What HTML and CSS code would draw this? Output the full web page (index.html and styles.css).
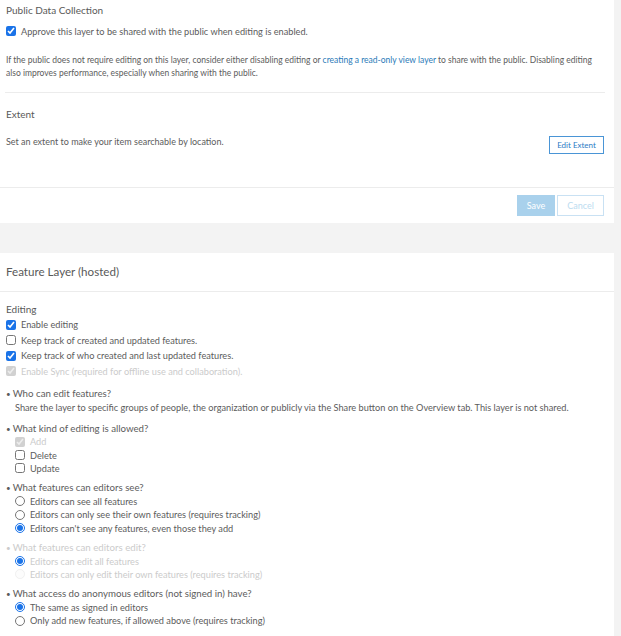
FILE: index.html
```html
<!DOCTYPE html>
<html lang="en">
<head>
    <meta charset="UTF-8">
    <meta name="viewport" content="width=device-width, initial-scale=1.0">
    <title>Settings</title>
    <link rel="stylesheet" href="styles.css">
</head>
<body>
    <div class="page">
        <div class="card">
            <div class="section public">
                <div class="title">Public Data Collection</div>
                <label class="check-row">
                    <input type="checkbox" checked>
                    <span>Approve this layer to be shared with the public when editing is enabled.</span>
                </label>
                <p class="note">If the public does not require editing on this layer, consider either disabling editing or <a href="#">creating a read-only view layer</a> to share with the public. Disabling editing also improves performance, especially when sharing with the public.</p>
            </div>
            <div class="section extent">
                <div class="title">Extent</div>
                <div class="extent-row">
                    <span class="small">Set an extent to make your item searchable by location.</span>
                    <button class="btn-outline">Edit Extent</button>
                </div>
            </div>
            <div class="actions">
                <button class="btn-save" disabled>Save</button>
                <button class="btn-cancel" disabled>Cancel</button>
            </div>
        </div>

        <div class="card layer">
            <div class="layer-head">Feature Layer (hosted)</div>
            <div class="layer-body">
                <div class="group-title">Editing</div>
                <div class="checks">
                    <label class="opt"><input type="checkbox" checked> Enable editing</label>
                    <label class="opt"><input type="checkbox"> Keep track of created and updated features.</label>
                    <label class="opt"><input type="checkbox" checked> Keep track of who created and last updated features.</label>
                    <label class="opt off"><input type="checkbox" checked disabled> Enable Sync (required for offline use and collaboration).</label>
                </div>

                <div class="question first">Who can edit features?</div>
                <div class="answer">Share the layer to specific groups of people, the organization or publicly via the Share button on the Overview tab. This layer is not shared.</div>

                <div class="question">What kind of editing is allowed?</div>
                <div class="options">
                    <label class="opt off"><input type="checkbox" checked disabled> Add</label>
                    <label class="opt"><input type="checkbox"> Delete</label>
                    <label class="opt"><input type="checkbox"> Update</label>
                </div>

                <div class="question">What features can editors see?</div>
                <div class="options">
                    <label class="opt"><input type="radio" name="see"> Editors can see all features</label>
                    <label class="opt"><input type="radio" name="see"> Editors can only see their own features (requires tracking)</label>
                    <label class="opt"><input type="radio" name="see" checked> Editors can't see any features, even those they add</label>
                </div>

                <div class="question off">What features can editors edit?</div>
                <div class="options">
                    <label class="opt off"><input type="radio" name="edit" checked> Editors can edit all features</label>
                    <label class="opt off"><input type="radio" name="edit" class="faint" disabled> Editors can only edit their own features (requires tracking)</label>
                </div>

                <div class="question">What access do anonymous editors (not signed in) have?</div>
                <div class="options">
                    <label class="opt"><input type="radio" name="anon" checked> The same as signed in editors</label>
                    <label class="opt"><input type="radio" name="anon"> Only add new features, if allowed above (requires tracking)</label>
                </div>
            </div>
        </div>
    </div>
</body>
</html>
```

FILE: styles.css
```css
body {
    margin: 0;
    background: #f3f3f3;
    font-family: Lato, "Open Sans", sans-serif;
    color: #5c5c5c;
}

.page {
    width: 614px;
}

.card {
    background: #fff;
}

.title {
    font-size: 10px;
    line-height: 20px;
    color: #595959;
}

.section {
    padding: 0 6px;
}

.check-row {
    display: flex;
    align-items: center;
    margin-top: 1px;
    height: 20px;
    font-size: 9.2px;
}

input[type="checkbox"], input[type="radio"] {
    width: 10px;
    height: 10px;
    margin: 0 5px 0 0;
    accent-color: #1a73e8;
}

.note {
    max-width: 592px;
    margin: 13px 0 0;
    font-size: 8.5px;
    line-height: 13px;
}

.note a {
    color: #2a7ab8;
    text-decoration: none;
}

.public {
    padding-bottom: 12px;
    border-bottom: 1px solid #ececec;
    margin: 0 9px 0 5px;
    padding-left: 1px;
    padding-right: 0;
}

.extent {
    padding-top: 11px;
    padding-bottom: 33px;
    border-bottom: 1px solid #ececec;
}

.extent-row {
    display: flex;
    justify-content: space-between;
    align-items: flex-start;
    margin-top: 11px;
    padding-right: 4px;
}

.small {
    font-size: 9px;
    line-height: 14px;
}

.btn-outline {
    margin-top: 1px;
    width: 55px;
    height: 18px;
    padding: 0;
    background: #fff;
    border: 1px solid #4a95d6;
    color: #2c7bc5;
    font-family: inherit;
    font-size: 8px;
}

.actions {
    display: flex;
    justify-content: flex-end;
    gap: 2px;
    padding: 7px 10px;
}

.btn-save, .btn-cancel {
    height: 21px;
    padding: 0;
    font-family: inherit;
    font-size: 9px;
}

.btn-save {
    width: 38px;
    background: #a9d1ec;
    border: none;
    color: #fff;
}

.btn-cancel {
    width: 47px;
    background: #fff;
    border: 1px solid #c9e1f3;
    color: #bcdcf0;
}

.layer {
    margin-top: 30px;
}

.layer-head {
    height: 38px;
    line-height: 38px;
    padding-left: 6px;
    font-size: 11.6px;
    color: #595959;
    border-bottom: 1px solid #ececec;
}

.layer-body {
    padding: 9px 6px 20px;
    font-size: 9.2px;
}

.group-title {
    font-size: 10px;
    line-height: 16px;
    color: #595959;
}

.opt {
    display: flex;
    align-items: center;
    height: 13.4px;
}

.checks .opt {
    height: 15.5px;
}

.opt.off, .question.off {
    color: #cbcbcb;
}

.question {
    margin-top: 6px;
    font-size: 9.7px;
    line-height: 12.5px;
}

.question::before {
    content: "\2022";
    margin-right: 2px;
    font-size: 8px;
}

.question.first {
    margin-top: 7.5px;
}

.answer {
    padding-left: 9px;
    line-height: 15.5px;
}

.options {
    padding-left: 9px;
}

.faint {
    opacity: 0.3;
}
```
